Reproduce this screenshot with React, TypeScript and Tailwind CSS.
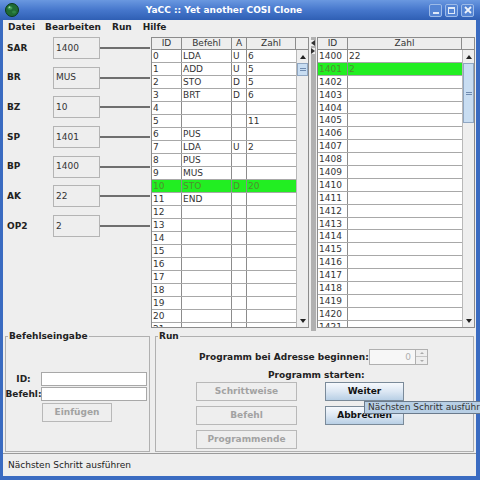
import type { ReactNode } from 'react'

const programRows: { id: number; cmd?: string; a?: string; num?: string }[] = [
  { id: 0, cmd: 'LDA', a: 'U', num: '6' },
  { id: 1, cmd: 'ADD', a: 'U', num: '5' },
  { id: 2, cmd: 'STO', a: 'D', num: '5' },
  { id: 3, cmd: 'BRT', a: 'D', num: '6' },
  { id: 4 },
  { id: 5, num: '11' },
  { id: 6, cmd: 'PUS' },
  { id: 7, cmd: 'LDA', a: 'U', num: '2' },
  { id: 8, cmd: 'PUS' },
  { id: 9, cmd: 'MUS' },
  { id: 10, cmd: 'STO', a: 'D', num: '20' },
  { id: 11, cmd: 'END' },
  ...Array.from({ length: 10 }, (_, i) => ({ id: 12 + i })),
]

const memoryRows = Array.from({ length: 22 }, (_, i) => ({
  id: 1400 + i,
  value: i === 0 ? '22' : i === 1 ? '2' : '',
}))

const registers = [
  ['SAR', '1400'],
  ['BR', 'MUS'],
  ['BZ', '10'],
  ['SP', '1401'],
  ['BP', '1400'],
  ['AK', '22'],
  ['OP2', '2'],
]

function TitleBar() {
  return (
    <div className="flex h-[20px] items-center bg-linear-to-b from-[#6a98e0] via-[#4677cc] to-[#2f5fb4]">
      <svg width="14" height="14" viewBox="0 0 14 14" className="ml-[5px]">
        <circle cx="7" cy="7" r="6.5" fill="#1f6b34" stroke="#0c3a18" strokeWidth="1" />
        <ellipse cx="5" cy="5" rx="2.5" ry="1.8" fill="#3f9a55" />
        <ellipse cx="9" cy="9" rx="2" ry="1.5" fill="#2f8545" />
        <circle cx="4.5" cy="4.2" r="0.9" fill="#9fd8a8" />
      </svg>
      <div className="flex-1 text-center font-bold text-white">YaCC :: Yet another COSI Clone</div>
      <div className="mr-[6px] flex gap-[3px]">
        <div className="flex h-[13px] w-[13px] items-end justify-center rounded-[2px] border border-[#9dbbe8] bg-[#5585d4] pb-[2px]">
          <div className="h-[2px] w-[6px] bg-[#dfe9f8]" />
        </div>
        <div className="flex h-[13px] w-[13px] items-center justify-center rounded-[2px] border border-[#9dbbe8] bg-[#5585d4]">
          <div className="h-[7px] w-[7px] border border-t-2 border-[#dfe9f8]" />
        </div>
        <div className="flex h-[13px] w-[13px] items-center justify-center rounded-[2px] border border-[#9dbbe8] bg-[#5585d4]">
          <svg width="8" height="8" viewBox="0 0 8 8">
            <path d="M1 1 L7 7 M7 1 L1 7" stroke="#eef3fb" strokeWidth="1.8" />
          </svg>
        </div>
      </div>
    </div>
  )
}

function MenuBar() {
  return (
    <div className="flex h-[14px] items-center gap-[10px] pl-[5px] font-bold">
      <span>Datei</span>
      <span>Bearbeiten</span>
      <span className="ml-[1px]">Run</span>
      <span className="ml-[1px]">Hilfe</span>
    </div>
  )
}

function Registers() {
  return (
    <div className="flex w-[148px] flex-col gap-[7.7px]">
      {registers.map(([name, value]) => (
        <div key={name} className="flex h-[22px] items-center">
          <div className="w-[50px] pl-[4px] font-bold">{name}</div>
          <div className="flex h-[22px] w-[47px] items-center border border-[#b4b4b4] bg-[#eeeeee] pl-[2px] text-[#333]">
            {value}
          </div>
          <div className="mr-[1px] h-[2px] flex-1 bg-[#6e6e6e]" />
        </div>
      ))}
    </div>
  )
}

function ScrollBar({ big }: { big?: boolean }) {
  return (
    <div className="flex w-[12px] flex-col border-l border-[#b8b8b8] bg-[#eeeeee]">
      <div className="flex h-[13px] items-center justify-center">
        <svg width="6" height="4" viewBox="0 0 6 4">
          <polygon points="0,4 3,0 6,4" fill="#222" />
        </svg>
      </div>
      <div
        className={`flex flex-col items-center justify-center gap-[1px] border border-[#8fa6c2] bg-[#c8ddf2] ${
          big ? 'h-[60px]' : 'h-[13px]'
        }`}
      >
        <div className="h-[1px] w-[6px] bg-[#6f8bb0]" />
        <div className="h-[1px] w-[6px] bg-[#6f8bb0]" />
      </div>
      <div className="flex-1" />
      <div className="flex h-[12px] items-center justify-center">
        <svg width="6" height="4" viewBox="0 0 6 4">
          <polygon points="0,0 3,4 6,0" fill="#222" />
        </svg>
      </div>
    </div>
  )
}

function HeaderCell({ w, children }: { w: string; children: ReactNode }) {
  return <div className={`${w} border-r border-[#8c8c8c] text-center text-[#333]`}>{children}</div>
}

function ProgramTable() {
  return (
    <div className="flex h-[291px] w-[158px] flex-col border border-[#8c8c8c] bg-[#eeeeee]">
      <div className="flex h-[12px] border-b border-[#8c8c8c] leading-[11px]">
        <HeaderCell w="w-[30px]">ID</HeaderCell>
        <HeaderCell w="w-[50px]">Befehl</HeaderCell>
        <HeaderCell w="w-[15px]">A</HeaderCell>
        <HeaderCell w="w-[49px]">Zahl</HeaderCell>
        <div className="w-[12px]" />
      </div>
      <div className="flex min-h-0 flex-1">
        <div className="flex-1 overflow-hidden bg-white">
          {programRows.map((r) => (
            <div
              key={r.id}
              className={`flex h-[13px] border-b border-[#a8a8a8] leading-[12px] ${
                r.id === 10 ? 'bg-[#22ee22] text-[#4f8f2f]' : 'text-[#333]'
              }`}
            >
              <div className="w-[30px] border-r border-[#8c8c8c] pl-[1px]">{r.id}</div>
              <div className="w-[50px] border-r border-[#8c8c8c] pl-[1px]">{r.cmd}</div>
              <div className="w-[15px] border-r border-[#8c8c8c] pl-[1px]">{r.a}</div>
              <div className="flex-1 pl-[1px]">{r.num}</div>
            </div>
          ))}
        </div>
        <ScrollBar />
      </div>
    </div>
  )
}

function Divider() {
  return (
    <div className="flex w-[8px] pl-[2px]">
      <div className="flex w-[5px] flex-col items-start bg-[radial-gradient(circle,#8e8e8e_0.6px,transparent_0.9px)] bg-[length:2px_2px]">
        <svg width="4" height="6" viewBox="0 0 4 6" className="mt-[3px] bg-[#eeeeee]">
          <polygon points="4,0 0,3 4,6" fill="#333" />
        </svg>
        <svg width="4" height="6" viewBox="0 0 4 6" className="mt-[2px] bg-[#eeeeee]">
          <polygon points="0,0 4,3 0,6" fill="#333" />
        </svg>
      </div>
    </div>
  )
}

function MemoryTable() {
  return (
    <div className="flex h-[291px] w-[158px] flex-col border border-[#8c8c8c] bg-[#eeeeee]">
      <div className="flex h-[12px] border-b border-[#8c8c8c] leading-[11px]">
        <HeaderCell w="w-[30px]">ID</HeaderCell>
        <HeaderCell w="w-[114px]">Zahl</HeaderCell>
        <div className="w-[12px]" />
      </div>
      <div className="flex min-h-0 flex-1">
        <div className="flex-1 overflow-hidden bg-white">
          {memoryRows.map((r) => (
            <div
              key={r.id}
              className={`flex h-[12.9px] border-b border-[#a8a8a8] leading-[12px] ${
                r.id === 1401 ? 'bg-[#22ee22] text-[#4f8f2f]' : 'text-[#333]'
              }`}
            >
              <div className="w-[30px] border-r border-[#8c8c8c] pl-[1px]">{r.id}</div>
              <div className="flex-1 pl-[1px]">{r.value}</div>
            </div>
          ))}
        </div>
        <ScrollBar big />
      </div>
    </div>
  )
}

function DisabledButton({ children, className = '' }: { children: ReactNode; className?: string }) {
  return (
    <div
      className={`flex h-[19px] items-center justify-center border border-[#b8b8b8] bg-[#eeeeee] font-bold text-[#a2a2a2] ${className}`}
    >
      {children}
    </div>
  )
}

function OceanButton({ children }: { children: ReactNode }) {
  return (
    <div className="flex h-[19px] items-center justify-center border border-[#7a8a99] bg-linear-to-b from-[#f6f9fd] via-[#dce7f3] to-[#b8cfe5] font-bold text-[#111]">
      {children}
    </div>
  )
}

function CommandInput() {
  return (
    <fieldset className="ml-[2px] h-[121px] w-[145px] border border-[#b0b0b0]">
      <legend className="ml-[2px] px-[1px] font-bold">Befehlseingabe</legend>
      <div className="grid grid-cols-[33px_106px] gap-[1px] pl-[1px] pt-[30px]">
        <div className="flex h-[14px] items-center justify-center font-bold">ID:</div>
        <div className="h-[14px] border border-[#a8a8a8] bg-white" />
        <div className="flex h-[14px] items-center justify-center font-bold">Befehl:</div>
        <div className="h-[14px] border border-[#a8a8a8] bg-white" />
        <DisabledButton className="col-start-2 ml-[1px] mt-[1px] w-[70px]">Einfügen</DisabledButton>
      </div>
    </fieldset>
  )
}

function RunPanel() {
  return (
    <fieldset className="ml-[5px] h-[121px] w-[319px] border border-[#b0b0b0]">
      <legend className="ml-[2px] px-[1px] font-bold">Run</legend>
      <div className="mt-[7px] flex h-[16px] items-center pl-[43px]">
        <div className="w-[167px] whitespace-nowrap font-bold">Programm bei Adresse beginnen:</div>
        <div className="ml-[3px] flex h-[16px] w-[47px] items-center justify-end border border-[#b0b0b0] bg-[#f7f7f7] pr-[4px] text-[#b0b0b0]">
          0
        </div>
        <div className="flex h-[16px] w-[12px] flex-col border border-l-0 border-[#b0b0b0] bg-[#eeeeee]">
          <div className="flex h-[7px] items-center justify-center border-b border-[#c4c4c4]">
            <svg width="4" height="2" viewBox="0 0 4 2">
              <polygon points="0,2 2,0 4,2" fill="#aaa" />
            </svg>
          </div>
          <div className="flex flex-1 items-center justify-center">
            <svg width="4" height="2" viewBox="0 0 4 2">
              <polygon points="0,0 2,2 4,0" fill="#aaa" />
            </svg>
          </div>
        </div>
      </div>
      <div className="mt-[5px] h-[11px] pl-[112px] font-bold">Programm starten:</div>
      <div className="mt-[1px] grid grid-cols-[101px_79px] gap-x-[28px] gap-y-[5px] pl-[40px]">
        <DisabledButton>Schrittweise</DisabledButton>
        <OceanButton>Weiter</OceanButton>
        <DisabledButton>Befehl</DisabledButton>
        <OceanButton>Abbrechen</OceanButton>
        <DisabledButton>Programmende</DisabledButton>
      </div>
    </fieldset>
  )
}

export default function App() {
  return (
    <div className="relative h-[480px] w-[480px] overflow-hidden bg-[#3a6bc1] font-['DejaVu_Sans',sans-serif] text-[9px] leading-[11px] text-[#222]">
      <TitleBar />
      <div className="ml-[3px] flex h-[456px] w-[473px] flex-col bg-[#eeeeee]">
        <MenuBar />
        <div className="flex h-[297px] pt-[3px]">
          <Registers />
          <ProgramTable />
          <Divider />
          <MemoryTable />
        </div>
        <div className="flex h-[121px]">
          <CommandInput />
          <RunPanel />
        </div>
        <div className="h-[1px]" />
        <div className="flex h-[23px] items-center border-t border-[#9a9a9a] pl-[5px] text-[#222]">
          Nächsten Schritt ausführen
        </div>
      </div>
      <div className="absolute left-[364px] top-[401px] h-[13px] w-[130px] whitespace-nowrap border border-[#6a7a8c] bg-[#b8cfe5] pl-[3px] leading-[11px] text-[#333]">
        Nächsten Schritt ausführen
      </div>
    </div>
  )
}
